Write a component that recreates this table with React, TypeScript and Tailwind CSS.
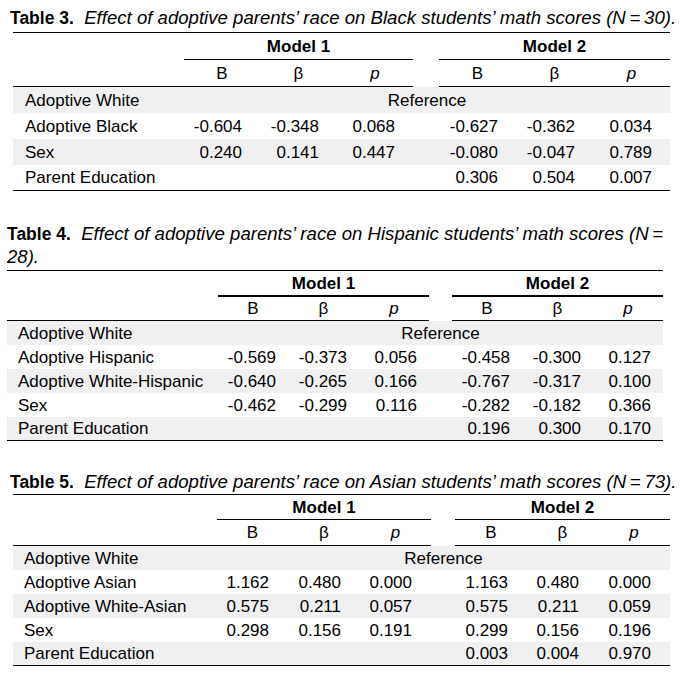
import type { ReactNode } from "react";

type Row = { label: string; values: string[] | null };

type TableSpec = {
  title: ReactNode;
  titleBox: string;
  box: string;
  cols: string;
  labelPad: string;
  numPad: string;
  modelBorder: string;
  modelH: string;
  headH: string;
  rowH: string;
  rows: Row[];
};

const font = { fontFamily: '"Liberation Sans Narrow", "Arial Narrow", "Liberation Sans", Arial, sans-serif' };

const tables: TableSpec[] = [
  {
    title: (
      <>
        <b className="text-[17.5px] leading-none">Table 3.</b>&nbsp; <i>Effect of adoptive parents’ race on Black students’ math scores (N&thinsp;=&thinsp;30).</i>
      </>
    ),
    titleBox: "ml-[10px] pt-[6px] mb-[3px]",
    box: "ml-[13px] w-[657px]",
    cols: "grid-cols-[171px_76px_77px_76px_26px_77px_77px_77px]",
    labelPad: "pl-[12px]",
    numPad: "pr-[18px]",
    modelBorder: "border-b",
    modelH: "h-[27px]",
    headH: "h-[27px]",
    rowH: "h-[26px]",
    rows: [
      { label: "Adoptive White", values: null },
      { label: "Adoptive Black", values: ["-0.604", "-0.348", "0.068", "-0.627", "-0.362", "0.034"] },
      { label: "Sex", values: ["0.240", "0.141", "0.447", "-0.080", "-0.047", "0.789"] },
      { label: "Parent Education", values: ["", "", "", "0.306", "0.504", "0.007"] },
    ],
  },
  {
    title: (
      <>
        <b className="text-[17.5px] leading-none">Table 4.</b>&nbsp; <i>Effect of adoptive parents’ race on Hispanic students’ math scores (N&thinsp;=</i>
        <br />
        <i>28).</i>
      </>
    ),
    titleBox: "ml-[7px] mt-[31px] mb-[2px]",
    box: "ml-[7px] w-[656px]",
    cols: "grid-cols-[211px_70px_71px_70px_23px_70px_71px_70px]",
    labelPad: "pl-[11px]",
    numPad: "pr-[12px]",
    modelBorder: "border-b-2",
    modelH: "h-[26px]",
    headH: "h-[24px]",
    rowH: "h-[24px]",
    rows: [
      { label: "Adoptive White", values: null },
      { label: "Adoptive Hispanic", values: ["-0.569", "-0.373", "0.056", "-0.458", "-0.300", "0.127"] },
      { label: "Adoptive White-Hispanic", values: ["-0.640", "-0.265", "0.166", "-0.767", "-0.317", "0.100"] },
      { label: "Sex", values: ["-0.462", "-0.299", "0.116", "-0.282", "-0.182", "0.366"] },
      { label: "Parent Education", values: ["", "", "", "0.196", "0.300", "0.170"] },
    ],
  },
  {
    title: (
      <>
        <b className="text-[17.5px] leading-none">Table 5.</b>&nbsp; <i>Effect of adoptive parents’ race on Asian students’ math scores (N&thinsp;=&thinsp;73).</i>
      </>
    ),
    titleBox: "ml-[10px] mt-[29px] mb-[1px]",
    box: "ml-[13px] w-[657px]",
    cols: "grid-cols-[204px_71px_72px_71px_24px_72px_71px_72px]",
    labelPad: "pl-[11px]",
    numPad: "pr-[19px]",
    modelBorder: "border-b",
    modelH: "h-[25px]",
    headH: "h-[26px]",
    rowH: "h-[24px]",
    rows: [
      { label: "Adoptive White", values: null },
      { label: "Adoptive Asian", values: ["1.162", "0.480", "0.000", "1.163", "0.480", "0.000"] },
      { label: "Adoptive White-Asian", values: ["0.575", "0.211", "0.057", "0.575", "0.211", "0.059"] },
      { label: "Sex", values: ["0.298", "0.156", "0.191", "0.299", "0.156", "0.196"] },
      { label: "Parent Education", values: ["", "", "", "0.003", "0.004", "0.970"] },
    ],
  },
];

function RegressionTable({ t }: { t: TableSpec }) {
  const heads = ["B", "β", "p"];
  return (
    <div>
      <p className={`whitespace-nowrap text-[18.6px] leading-[23px] ${t.titleBox}`}>{t.title}</p>
      <div className={`${t.box} border-t border-black text-[17px] leading-[23px]`}>
        {/* model group row */}
        <div className={`grid ${t.cols} ${t.modelH}`}>
          <div />
          <div className={`col-span-3 flex items-center justify-center border-black font-bold ${t.modelBorder}`}>Model 1</div>
          <div />
          <div className={`col-span-3 flex items-center justify-center border-black font-bold ${t.modelBorder}`}>Model 2</div>
        </div>
        {/* column heads */}
        <div className={`grid ${t.cols} ${t.headH}`}>
          <div className="border-b border-black" />
          {heads.map((h) => (
            <div key={"a" + h} className={`flex items-center justify-center border-b border-black ${h === "p" ? "italic" : ""}`}>
              {h}
            </div>
          ))}
          <div />
          {heads.map((h) => (
            <div key={"b" + h} className={`flex items-center justify-center border-b border-black ${h === "p" ? "italic" : ""}`}>
              {h}
            </div>
          ))}
        </div>
        {t.rows.map((r, i) => (
          <div
            key={r.label}
            className={`grid ${t.cols} ${t.rowH} ${i % 2 === 0 ? "bg-[#f0f0f0]" : "bg-white"} ${
              i === t.rows.length - 1 ? "border-b border-black" : ""
            }`}
          >
            <div className={`flex items-center whitespace-nowrap ${t.labelPad}`}>{r.label}</div>
            {r.values === null ? (
              <div className="col-span-7 flex items-center justify-center">Reference</div>
            ) : (
              <>
                {r.values.slice(0, 3).map((v, j) => (
                  <div key={"m1" + j} className={`flex items-center justify-end ${t.numPad}`}>{v}</div>
                ))}
                <div />
                {r.values.slice(3).map((v, j) => (
                  <div key={"m2" + j} className={`flex items-center justify-end ${t.numPad}`}>{v}</div>
                ))}
              </>
            )}
          </div>
        ))}
      </div>
    </div>
  );
}

export default function App() {
  return (
    <div className="h-[683px] w-[681px] bg-white text-black" style={font}>
      {tables.map((t, i) => (
        <RegressionTable key={i} t={t} />
      ))}
    </div>
  );
}
